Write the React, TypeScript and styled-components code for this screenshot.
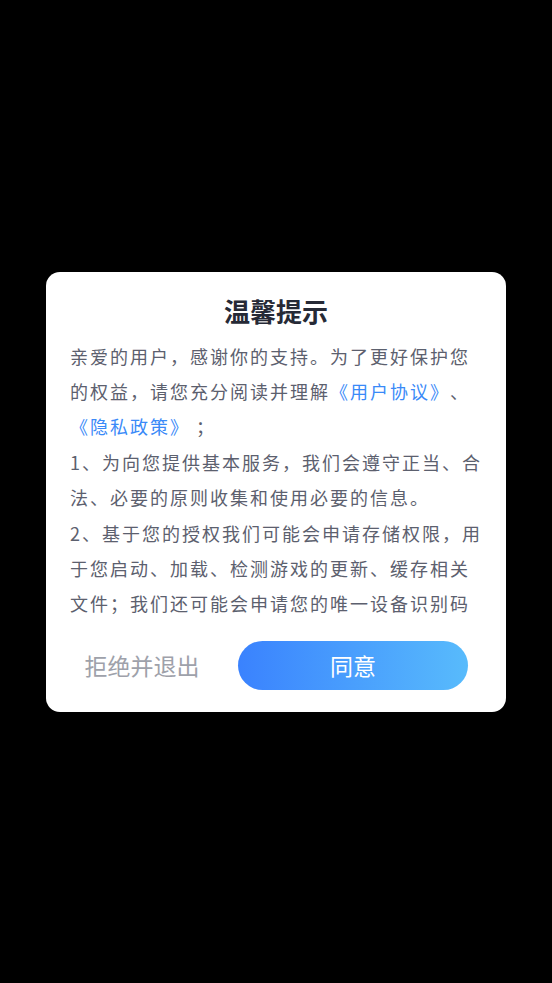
import React from "react";
import styled, { createGlobalStyle } from "styled-components";

const GlobalStyle = createGlobalStyle`
  html, body {
    margin: 0;
    padding: 0;
    background: #000;
    font-family: "Noto Sans CJK SC", "Noto Sans", sans-serif;
  }
  * { box-sizing: border-box; }
`;

const Screen = styled.div`
  width: 552px;
  height: 983px;
  background: #000;
  display: flex;
  align-items: center;
  justify-content: center;
`;

const Card = styled.div`
  width: 460px;
  background: #fff;
  border-radius: 14px;
  padding: 21px 0 22px;
  display: flex;
  flex-direction: column;
`;

const Title = styled.h1`
  margin: 0;
  font-size: 26px;
  line-height: 36px;
  font-weight: 700;
  color: #262a36;
  text-align: center;
`;

const Body = styled.div`
  margin-top: 10px;
  height: 283px;
  overflow: hidden;
  padding: 0 20px 0 24px;
  font-size: 18px;
  letter-spacing: 2px;
  line-height: 35.4px;
  color: #5c606e;
  text-spacing-trim: space-all;
`;

const Para = styled.p`
  margin: 0;
`;

const Link = styled.span`
  color: #3a8af8;
`;

const Footer = styled.div`
  margin-top: 19px;
  display: flex;
  align-items: center;
  padding-right: 38px;
`;

const TextButton = styled.button`
  flex: 1;
  height: 49px;
  border: none;
  background: transparent;
  font-family: inherit;
  font-size: 23px;
  color: #9ea1aa;
  padding: 0;
`;

const PrimaryButton = styled.button`
  width: 230px;
  height: 49px;
  border: none;
  border-radius: 25px;
  background: linear-gradient(90deg, #3a82fe 0%, #58bbfc 100%);
  font-family: inherit;
  font-size: 23px;
  color: #fff;
  padding: 0;
`;

export default function App() {
  return (
    <>
      <GlobalStyle />
      <Screen>
        <Card>
          <Title>温馨提示</Title>
          <Body>
            <Para>
              亲爱的用户，感谢你的支持。为了更好保护您的权益，请您充分阅读并理解
              <Link>《用户协议》</Link>、<Link>《隐私政策》</Link> ；
            </Para>
            <Para>1、为向您提供基本服务，我们会遵守正当、合法、必要的原则收集和使用必要的信息。</Para>
            <Para>
              2、基于您的授权我们可能会申请存储权限，用于您启动、加载、检测游戏的更新、缓存相关文件；我们还可能会申请您的唯一设备识别码（如IMEI、Android ID）用于保障账号安全与统计分析。
            </Para>
            <Para>3、未经您的同意，我们不会向第三方共享、提供您的个人信息。</Para>
          </Body>
          <Footer>
            <TextButton>拒绝并退出</TextButton>
            <PrimaryButton>同意</PrimaryButton>
          </Footer>
        </Card>
      </Screen>
    </>
  );
}
